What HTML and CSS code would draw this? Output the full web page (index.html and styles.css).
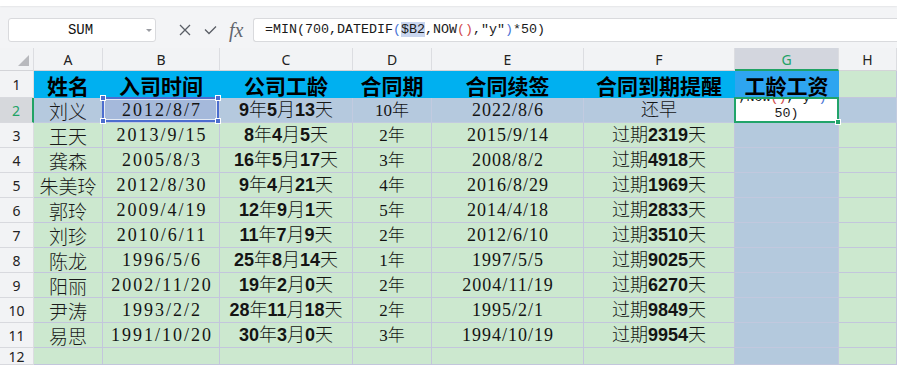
FILE: index.html
```html
<!DOCTYPE html>
<html lang="zh">
<head>
<meta charset="utf-8">
<title>Sheet</title>
<link rel="stylesheet" href="styles.css">
</head>
<body>
<div class="top"></div>
<div class="fbar">
  <div class="namebox"><span class="nbtext">SUM</span><i class="caret"></i></div>
  <div class="ficons">
    <svg class="ico" width="12" height="12" viewBox="0 0 12 12"><path d="M1 1L11 11M11 1L1 11" stroke="#5a5e66" stroke-width="1.3" fill="none"/></svg>
    <svg class="ico" width="13" height="10" viewBox="0 0 13 10"><path d="M1 4.5L5 8.5L12 1.5" stroke="#5a5e66" stroke-width="1.3" fill="none"/></svg>
    <span class="fx">fx</span>
  </div>
  <div class="formula">=MIN(700,DATEDIF<span class="pb">(</span><span class="ref">$B2</span>,NOW<span class="pr">()</span>,"y"<span class="pb">)</span>*50)</div>
</div>
<div class="sheet">
  <div class="corner"><i class="tri"></i></div>
  <div class="ch">A</div><div class="ch">B</div><div class="ch">C</div><div class="ch">D</div><div class="ch">E</div><div class="ch">F</div><div class="ch chs">G</div><div class="ch">H</div>

  <div class="rh">1</div>
  <div class="c t">姓名</div><div class="c t">入司时间</div><div class="c t">公司工龄</div><div class="c t">合同期</div><div class="c t">合同续签</div><div class="c t">合同到期提醒</div><div class="c t gt">工龄工资</div><div class="c"></div>

  <div class="rh rhs">2</div>
  <div class="c r2 nm">刘义</div>
  <div class="c r2 b2 dt"><span>2012/8/7</span><div class="selbox"><i class="hd h-tl"></i><i class="hd h-tr"></i><i class="hd h-bl"></i><i class="hd h-br"></i></div></div>
  <div class="c r2 age"><b>9</b>年<b>5</b>月<b>13</b>天</div>
  <div class="c r2 yr">10年</div>
  <div class="c r2 dt2">2022/8/6</div>
  <div class="c r2 due">还早</div>
  <div class="c edit"><div class="editbox"><div class="eline e1">,NOW<span class="pr">()</span>,"y"<span class="pb">)</span>*</div><div class="eline">50)</div></div><i class="gh"></i></div>
  <div class="c r2"></div>

  <div class="rh">3</div>
  <div class="c nm">王天</div><div class="c dt">2013/9/15</div><div class="c age"><b>8</b>年<b>4</b>月<b>5</b>天</div><div class="c yr">2年</div><div class="c dt2">2015/9/14</div><div class="c due">过期<b>2319</b>天</div><div class="c gc"></div><div class="c"></div>

  <div class="rh">4</div>
  <div class="c nm">龚森</div><div class="c dt">2005/8/3</div><div class="c age"><b>16</b>年<b>5</b>月<b>17</b>天</div><div class="c yr">3年</div><div class="c dt2">2008/8/2</div><div class="c due">过期<b>4918</b>天</div><div class="c gc"></div><div class="c"></div>

  <div class="rh">5</div>
  <div class="c nm">朱美玲</div><div class="c dt">2012/8/30</div><div class="c age"><b>9</b>年<b>4</b>月<b>21</b>天</div><div class="c yr">4年</div><div class="c dt2">2016/8/29</div><div class="c due">过期<b>1969</b>天</div><div class="c gc"></div><div class="c"></div>

  <div class="rh">6</div>
  <div class="c nm">郭玲</div><div class="c dt">2009/4/19</div><div class="c age"><b>12</b>年<b>9</b>月<b>1</b>天</div><div class="c yr">5年</div><div class="c dt2">2014/4/18</div><div class="c due">过期<b>2833</b>天</div><div class="c gc"></div><div class="c"></div>

  <div class="rh">7</div>
  <div class="c nm">刘珍</div><div class="c dt">2010/6/11</div><div class="c age"><b>11</b>年<b>7</b>月<b>9</b>天</div><div class="c yr">2年</div><div class="c dt2">2012/6/10</div><div class="c due">过期<b>3510</b>天</div><div class="c gc"></div><div class="c"></div>

  <div class="rh">8</div>
  <div class="c nm">陈龙</div><div class="c dt">1996/5/6</div><div class="c age"><b>25</b>年<b>8</b>月<b>14</b>天</div><div class="c yr">1年</div><div class="c dt2">1997/5/5</div><div class="c due">过期<b>9025</b>天</div><div class="c gc"></div><div class="c"></div>

  <div class="rh">9</div>
  <div class="c nm">阳丽</div><div class="c dt">2002/11/20</div><div class="c age"><b>19</b>年<b>2</b>月<b>0</b>天</div><div class="c yr">2年</div><div class="c dt2">2004/11/19</div><div class="c due">过期<b>6270</b>天</div><div class="c gc"></div><div class="c"></div>

  <div class="rh">10</div>
  <div class="c nm">尹涛</div><div class="c dt">1993/2/2</div><div class="c age"><b>28</b>年<b>11</b>月<b>18</b>天</div><div class="c yr">2年</div><div class="c dt2">1995/2/1</div><div class="c due">过期<b>9849</b>天</div><div class="c gc"></div><div class="c"></div>

  <div class="rh">11</div>
  <div class="c nm">易思</div><div class="c dt">1991/10/20</div><div class="c age"><b>30</b>年<b>3</b>月<b>0</b>天</div><div class="c yr">3年</div><div class="c dt2">1994/10/19</div><div class="c due">过期<b>9954</b>天</div><div class="c gc"></div><div class="c"></div>

  <div class="rh">12</div>
  <div class="c"></div><div class="c"></div><div class="c"></div><div class="c"></div><div class="c"></div><div class="c"></div><div class="c gc"></div><div class="c"></div>
</div>
</body>
</html>
```

FILE: styles.css
```css
* { box-sizing: border-box; margin: 0; padding: 0; }
html, body { width: 897px; height: 365px; overflow: hidden; }
body {
  background: #f3f4f6;
  font-family: "Noto Sans", "Noto Sans CJK SC", sans-serif;
  color: #111;
}
.top {
  height: 6px;
  background: #fff;
  box-shadow: 0 1px 2px rgba(0,0,0,0.06);
}
.fbar {
  height: 42px;
  display: flex;
  align-items: flex-start;
  padding: 12px 0 0 8px;
}
.namebox {
  width: 148px;
  height: 24px;
  background: #fff;
  border: 1px solid #d9dadd;
  border-radius: 3px;
  display: flex;
  align-items: center;
  font-family: "Liberation Mono", monospace;
  font-size: 14px;
  color: #111;
}
.nbtext { flex: 1; text-align: center; padding-left: 6px; }
.caret {
  width: 0; height: 0;
  margin-right: 3px;
  border-left: 3px solid transparent;
  border-right: 3px solid transparent;
  border-top: 3px solid #9a9ca2;
}
.ficons {
  width: 97px;
  height: 24px;
  display: flex;
  align-items: center;
  padding-left: 23px;
  gap: 13px;
}
.ico { display: block; }
.fx {
  font-family: "Liberation Serif", serif;
  font-style: italic;
  font-size: 20px;
  color: #62666d;
  margin-left: -1px;
  line-height: 20px;
}
.formula {
  flex: 1;
  height: 24px;
  background: #fff;
  border: 1px solid #d9dadd;
  border-right: none;
  border-radius: 3px 0 0 3px;
  padding-left: 11px;
  font-family: "Liberation Mono", monospace;
  font-size: 13.33px;
  line-height: 22px;
  color: #1a1a1a;
  white-space: pre;
}
.pb { color: #4a74d6; }
.pr { color: #d24b4b; }
.ref { background: #c9d6ef; }

.sheet {
  display: grid;
  grid-template-columns: 34px 69px 117px 133px 79px 152px 151px 104px 58px;
  grid-template-rows: 23px 27px repeat(10, 25px) 17px;
}
.corner {
  background: #f2f3f5;
  border-right: 1px solid #dcdde1;
  border-bottom: 1px solid #d3d4d8;
  display: flex;
  align-items: flex-end;
  justify-content: flex-end;
  padding: 0 4px 4px 0;
}
.tri {
  width: 0; height: 0;
  border-left: 11px solid transparent;
  border-bottom: 11px solid #b8b9bd;
}
.ch {
  background: #f2f3f5;
  border-right: 1px solid #dcdde1;
  border-bottom: 1px solid #d3d4d8;
  display: flex;
  align-items: center;
  justify-content: center;
  font-size: 14px;
  color: #222;
}
.chs {
  background: #d3d6de;
  color: #21a366;
  border-bottom: 2px solid #21a366;
  padding-top: 1px;
}
.rh {
  background: #f2f3f5;
  border-right: 1px solid #dcdde1;
  border-bottom: 1px solid #d8d9de;
  display: flex;
  align-items: center;
  justify-content: center;
  font-size: 14px;
  color: #222;
}
.rhs {
  background: #d6d8dc;
  color: #21a366;
  border-right: 2px solid #21a366;
}
.c {
  background: #cce8cf;
  border-right: 1px solid #c3c6dc;
  border-bottom: 1px solid #c3c6dc;
  display: flex;
  align-items: center;
  justify-content: center;
  white-space: nowrap;
  color: #141414;
}
.t {
  background: #00b0f0;
  border-color: #00b0f0;
  font-family: "Noto Sans CJK SC", sans-serif;
  font-weight: 700;
  font-size: 21px;
  color: #000;
  line-height: 1;
  padding-top: 2px;
}
.gt { background: #2ea5f0; border-color: #2ea5f0; }
.r2 { background: #b5c9de; border-color: #c2cbe0; }
.gc { background: #b4c9dd; border-color: #c2c8de; }

.nm {
  font-family: "Noto Sans CJK SC", sans-serif;
  font-weight: 300;
  font-size: 19px;
  line-height: 1;
  color: #1a1a1a;
}
.dt {
  font-family: "Liberation Serif", serif;
  font-size: 18px;
  letter-spacing: 2px;
  padding-left: 2px;
}
.dt2 {
  font-family: "Liberation Serif", serif;
  font-size: 18px;
  letter-spacing: 1px;
  padding-left: 1px;
}
.age, .due {
  font-family: "Liberation Sans", "Noto Sans CJK SC", sans-serif;
  font-weight: 300;
  font-size: 18px;
  line-height: 1;
}
.age b, .due b { font-weight: 700; }
.yr {
  font-family: "Liberation Serif", "Noto Sans CJK SC", serif;
  font-weight: 300;
  font-size: 17px;
  line-height: 1;
}

.b2 { position: relative; background: #a5b9db; }
.selbox {
  position: absolute;
  left: -1px; top: -1px; right: 0; bottom: 0;
  border: 2px solid #4c6dcf;
  box-shadow: inset 0 0 0 1px rgba(255,255,255,0.7);
}
.hd {
  position: absolute;
  width: 6px; height: 6px;
  background: #4c6dcf;
  border: 1px solid #fff;
}
.h-tl { left: -4px; top: -4px; }
.h-tr { right: -4px; top: -4px; }
.h-bl { left: -4px; bottom: -4px; }
.h-br { right: -4px; bottom: -4px; }

.edit {
  position: relative;
  background: #fff;
  border: 2px solid #21a46a;
  margin: -1px 0 0 -1px;
  align-items: flex-start;
  overflow: visible;
}
.editbox {
  width: 100%;
  height: 100%;
  overflow: hidden;
  font-family: "Liberation Mono", monospace;
  font-size: 13.33px;
  line-height: 16px;
  color: #1a1a1a;
}
.eline { text-align: center; }
.e1 { margin-top: -9px; }
.gh {
  position: absolute;
  right: -4px; bottom: -4px;
  width: 6px; height: 6px;
  background: #21a46a;
  border: 1px solid #fff;
}
```
